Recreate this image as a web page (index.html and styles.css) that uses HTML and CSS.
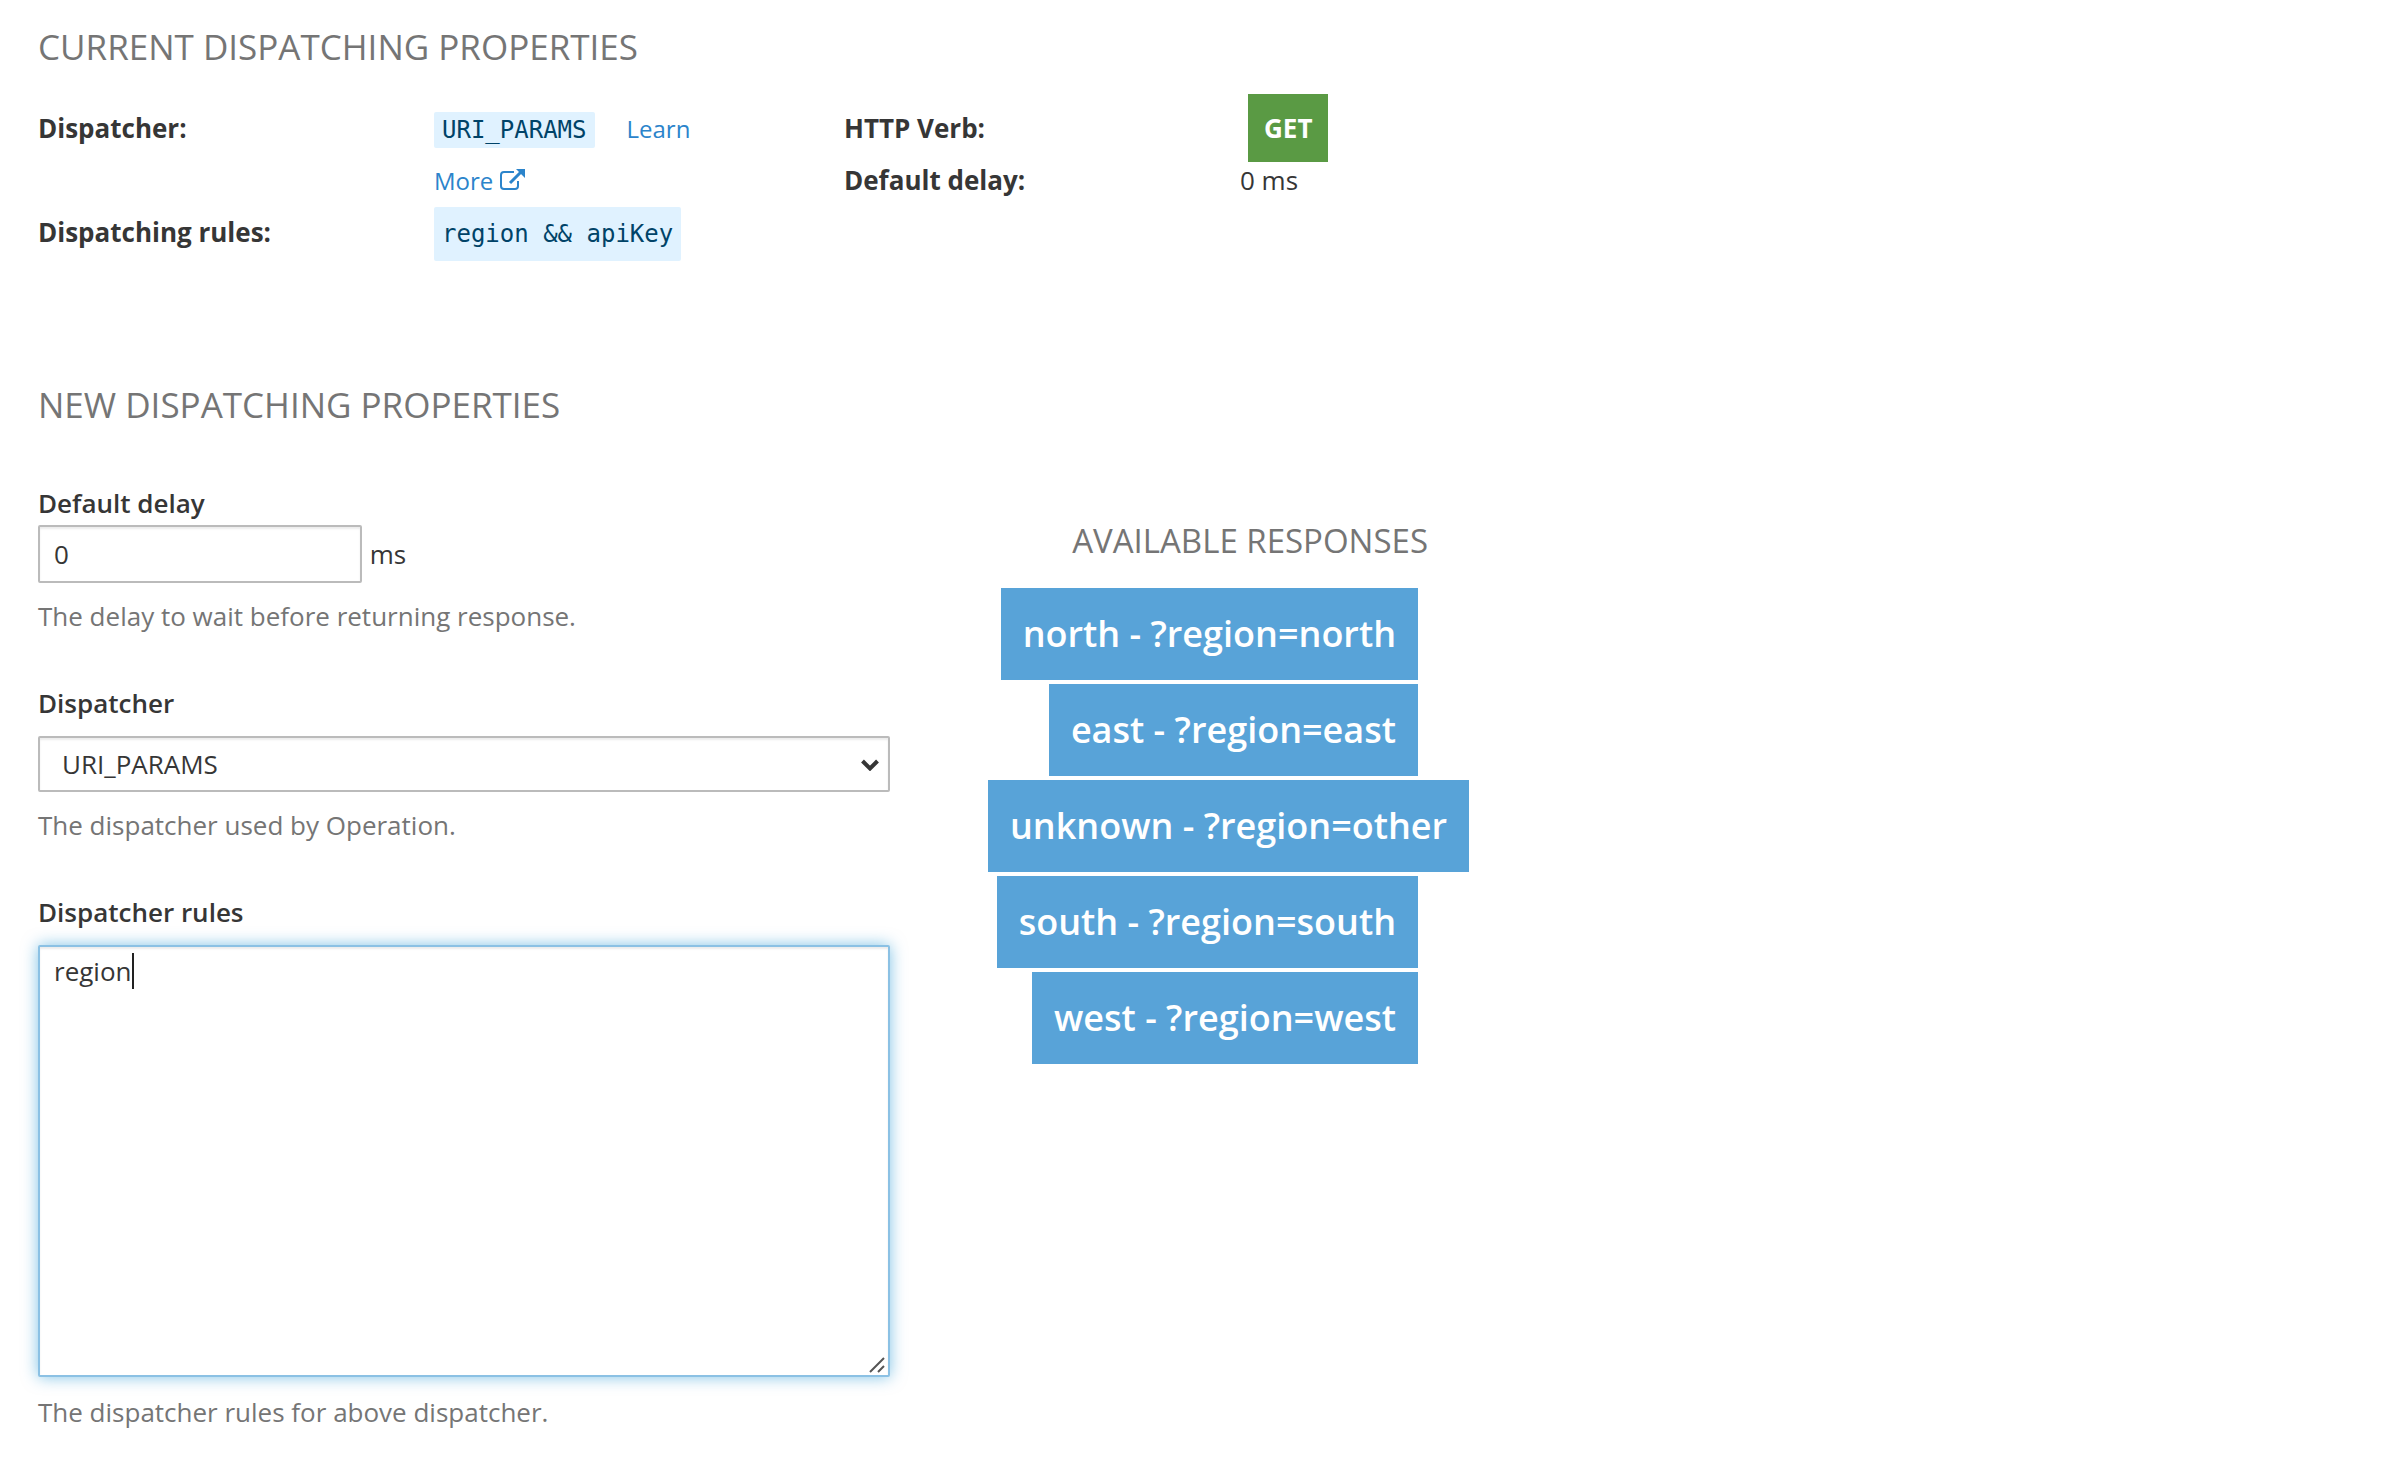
FILE: index.html
```html
<!DOCTYPE html>
<html lang="en">
<head>
<meta charset="utf-8">
<meta name="viewport" content="width=device-width, initial-scale=1">
<title>Dispatching properties</title>
<link rel="stylesheet" href="styles.css">
</head>
<body>
<main class="page">
  <section class="current">
    <h2 class="section-title">CURRENT DISPATCHING PROPERTIES</h2>
    <div class="properties">
      <dl class="property-list">
        <dt>Dispatcher:</dt>
        <dd><code class="code">URI_PARAMS</code><a class="link" href="#dispatchers">Learn More <svg class="link-icon" viewBox="0 0 25 21" aria-hidden="true"><path d="M14 3H4A3 3 0 0 0 1 6V17A3 3 0 0 0 4 20H15A3 3 0 0 0 18 17V12" fill="none" stroke="currentColor" stroke-width="2"/><path d="M10 14L21 3" fill="none" stroke="currentColor" stroke-width="3"/><path d="M16 0H25V9Z" fill="currentColor"/></svg></a></dd>
        <dt>Dispatching rules:</dt>
        <dd><code class="code code-block">region &amp;&amp; apiKey</code></dd>
      </dl>
      <dl class="property-list">
        <dt>HTTP Verb:</dt>
        <dd><span class="verb">GET</span></dd>
        <dt>Default delay:</dt>
        <dd>0 ms</dd>
      </dl>
    </div>
  </section>

  <section class="new">
    <h2 class="section-title">NEW DISPATCHING PROPERTIES</h2>
    <div class="editor">
      <form class="form">
        <div class="field">
          <label class="label" for="delay">Default delay</label>
          <div class="delay">
            <input class="control delay-input" id="delay" type="text" value="0">
            <span>ms</span>
          </div>
          <p class="help">The delay to wait before returning response.</p>
        </div>
        <div class="field">
          <label class="label label-spaced" for="dispatcher">Dispatcher</label>
          <div class="select-wrap">
            <select class="control select" id="dispatcher"><option>URI_PARAMS</option></select>
            <svg class="chevron" viewBox="0 0 18 12" aria-hidden="true"><path d="M1.500 2L9 9.500L16.500 2" fill="none" stroke="currentColor" stroke-width="4"/></svg>
          </div>
          <p class="help">The dispatcher used by Operation.</p>
        </div>
        <div class="field">
          <label class="label label-spaced" for="rules">Dispatcher rules</label>
          <div class="rules-wrap">
            <textarea class="control rules" id="rules">region</textarea>
            <span class="caret"></span>
            <svg class="grip" viewBox="0 0 16 16" aria-hidden="true"><path d="M1 15L15 1M9 15L15 9" fill="none" stroke="currentColor" stroke-width="2"/></svg>
          </div>
          <p class="help help-loose">The dispatcher rules for above dispatcher.</p>
        </div>
      </form>
      <aside class="responses">
        <h3 class="responses-title">AVAILABLE RESPONSES</h3>
        <ul class="response-list">
          <li class="response">north - ?region=north</li>
          <li class="response">east - ?region=east</li>
          <li class="response response-wide">unknown - ?region=other</li>
          <li class="response">south - ?region=south</li>
          <li class="response">west - ?region=west</li>
        </ul>
      </aside>
    </div>
  </section>
</main>
</body>
</html>
```
FILE: styles.css
```css
* {
  box-sizing: border-box;
}

body {
  margin: 0;
  background: #fff;
  color: #363636;
  font-family: "Open Sans", sans-serif;
  font-size: 26px;
  line-height: 36px;
}

.page {
  padding: 22px 38px 32px;
}

.section-title,
.responses-title {
  margin: 0;
  color: #757575;
  font-weight: 400;
  line-height: 50px;
}

.section-title {
  font-size: 35px;
}

/* Current properties */

.properties {
  display: grid;
  grid-template-columns: 806fr 1508fr;
  padding-top: 30px;
  line-height: 52px;
}

.property-list {
  display: grid;
  grid-template-columns: 396px 310px;
  align-content: start;
  margin: 0;
}

.property-list dt {
  font-weight: 700;
}

.property-list dd {
  margin: 0;
}

.code {
  padding: 4px 8px;
  border-radius: 2px;
  background: #e0f2ff;
  color: #004368;
  font-family: "DejaVu Sans Mono", monospace;
  font-size: 24px;
  line-height: 1;
}

.code-block {
  padding: 13px 8px;
}

.link {
  margin-left: 32px;
  color: #2b84cb;
  font-size: 24px;
  line-height: 36px;
  text-decoration: none;
}

.link-icon {
  width: 25px;
  height: 21px;
  vertical-align: 0;
}

.verb {
  margin-left: 8px;
  padding: 16px;
  background: #5a9a44;
  color: #fff;
  font-weight: 700;
}

/* New properties */

.new {
  padding-top: 122px;
}

.editor {
  display: grid;
  grid-template-columns:
    minmax(0, 852fr) minmax(0, 98fr)
    minmax(0, 430fr) minmax(0, 934fr);
  padding-top: 53px;
}

.form {
  display: flex;
  flex-direction: column;
  gap: 49px;
}

.label {
  display: block;
  padding-bottom: 2px;
  font-weight: 600;
  line-height: 40px;
}

.label-spaced {
  padding-bottom: 13px;
}

.control {
  display: block;
  width: 100%;
  margin: 0;
  padding: 0 14px;
  border: 2px solid #bbb;
  border-radius: 2px;
  background: #fff;
  box-shadow: inset 0 2px 2px rgba(3, 3, 3, 0.08);
  color: #363636;
  font: inherit;
}

.delay {
  display: flex;
  align-items: center;
  gap: 8px;
}

.delay-input {
  width: 38%;
  height: 58px;
}

.help {
  margin: 0;
  padding-top: 15px;
  color: #757575;
}

.help-loose {
  padding-top: 17px;
}

.select-wrap,
.rules-wrap {
  position: relative;
}

.select {
  height: 56px;
  padding: 0 22px;
  appearance: none;
}

.chevron {
  position: absolute;
  top: 23px;
  right: 11px;
  width: 18px;
  height: 12px;
  pointer-events: none;
}

.rules {
  height: 432px;
  padding: 6px 14px;
  border-color: #8bc1e4;
  box-shadow: inset 0 2px 2px rgba(3, 3, 3, 0.08), 0 0 16px rgba(0, 136, 206, 0.5);
  outline: none;
  resize: none;
}

.caret {
  position: absolute;
  top: 8px;
  left: 94px;
  width: 2px;
  height: 36px;
  background: #222;
  pointer-events: none;
}

.grip {
  position: absolute;
  right: 5px;
  bottom: 4px;
  width: 16px;
  height: 16px;
  color: #555;
  pointer-events: none;
}

/* Available responses */

.responses {
  grid-column: 3;
  padding-top: 33px;
}

.responses-title {
  margin-right: -10px;
  font-size: 33px;
  text-align: right;
}

.response-list {
  display: flex;
  flex-direction: column;
  align-items: flex-end;
  gap: 4px;
  margin: 0;
  padding: 22px 0 0;
  list-style: none;
}

.response {
  padding: 21px 22px;
  background: #58a3d8;
  color: #fff;
  font-size: 36px;
  font-weight: 600;
  line-height: 50px;
  white-space: nowrap;
}

/* A label wider than the column runs out to the right */
.response-wide {
  align-self: flex-start;
}
```
